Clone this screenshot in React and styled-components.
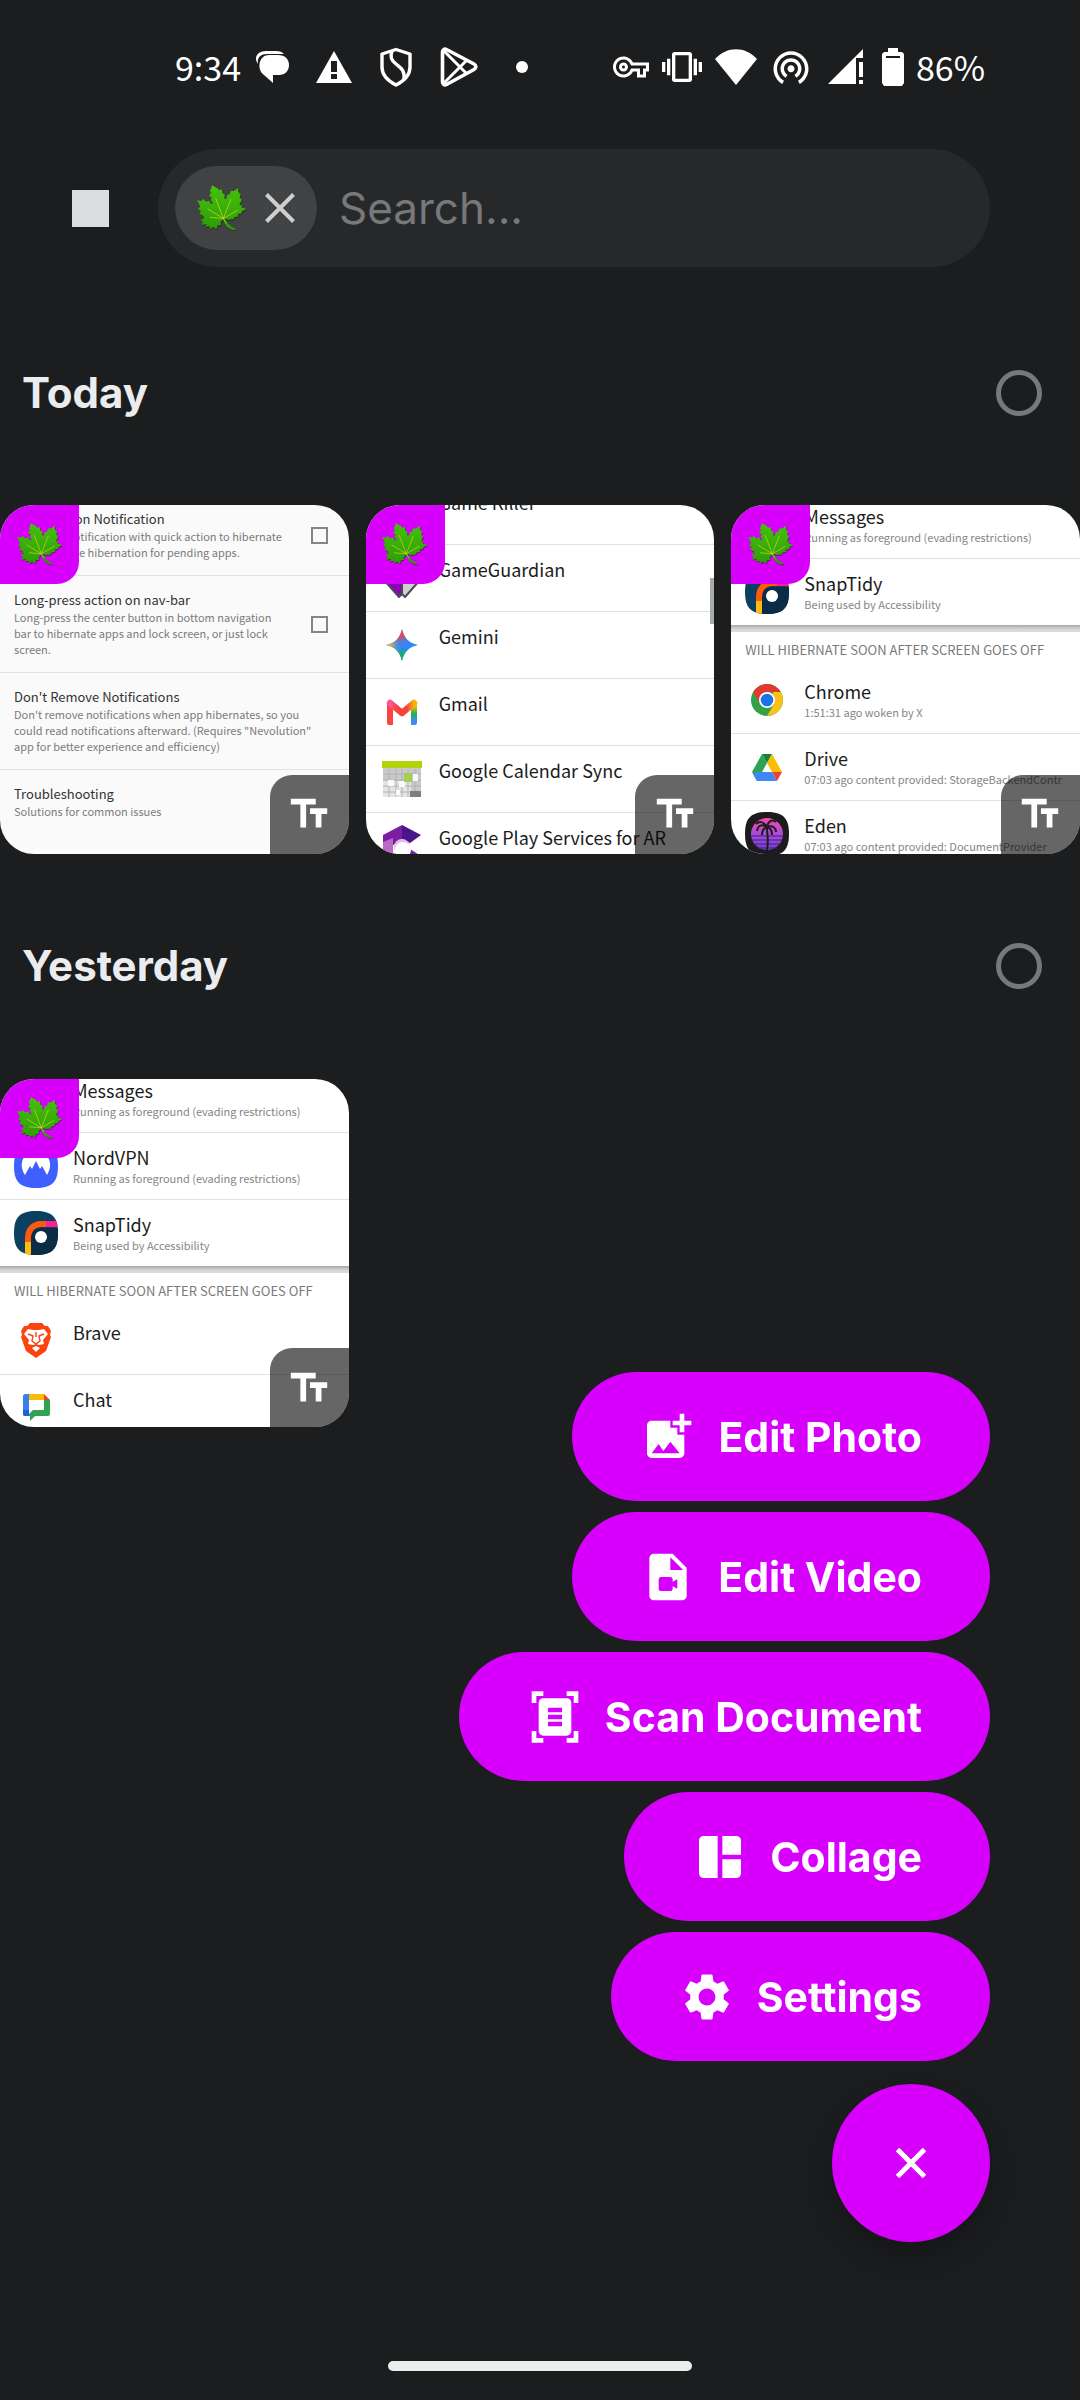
import React, { useState } from 'react'
import styled, { createGlobalStyle, ThemeProvider } from 'styled-components';
import {
  MdAddPhotoAlternate, MdDocumentScanner, MdOutlineVpnKey, MdSettings, MdTextFields, MdVibration, MdVideoFile, MdWifiTethering
} from "react-icons/md";

const theme = {
  bg: "#1b1d1e",
  bgLighter: "#27282a",
  chip: "#414243",
  text: "#ebecee",
  muted: "#77787a",
  accent: "#d600fc",
  ui: `Inter, "Liberation Sans", sans-serif`,
  system: `"Noto Sans CJK SC", "Noto Sans", sans-serif`,
};

const GlobalStyle = createGlobalStyle`
  * { box-sizing: border-box; }
  body {
    margin: 0;
    background-color: ${theme.bg};
    font-family: ${theme.ui};
  }
  h2, p, ul { margin: 0; padding: 0; }
  button { border: none; padding: 0; cursor: pointer; font-family: inherit; }
  svg { display: block; flex: none; }
`;

const Container = styled.div`
  display: flex;
  flex-direction: column;
  min-height: 100vh;
  background-color: ${({ theme }) => theme.bg};
  color: ${({ theme }) => theme.text};
`;
const StatusBar = styled.div`
  display: flex;
  align-items: center;
  justify-content: space-between;
  height: 136px;
  padding: 0 95px 2px 175px;
  color: #fff;
  font-family: ${({ theme }) => theme.system};
  font-size: 34px;
  line-height: 40px;
`;
const StatusGroup = styled.div`
  display: flex;
  align-items: center;
  gap: ${({ $gap }) => $gap}px;
`;
const Header = styled.header`
  display: flex;
  align-items: center;
  gap: 49px;
  height: 144px;
  padding: 0 90px 0 72px;
`;
const SquareButton = styled.button`
  flex: none;
  width: 37px;
  height: 37px;
  background-color: #dbdcdf;
`;
const Search = styled.div`
  flex: 1;
  min-width: 0;
  display: flex;
  align-items: center;
  gap: 20px;
  height: 118px;
  padding: 0 17px;
  border-radius: 59px;
  background-color: ${({ theme }) => theme.bgLighter};
`;
const Chip = styled.div`
  display: flex;
  align-items: center;
  gap: 18px;
  height: 84px;
  padding: 0 22px;
  border-radius: 42px;
  background-color: ${({ theme }) => theme.chip};
`;
const ChipClose = styled.button`
  background: transparent;
  color: #cfcfd0;
`;
const Input = styled.input`
  flex: 1;
  min-width: 0;
  border: none;
  outline: none;
  background: transparent;
  color: ${({ theme }) => theme.text};
  font-family: inherit;
  font-size: 44px;
  font-weight: 400;
  &::placeholder {
    color: ${({ theme }) => theme.muted};
    opacity: 1;
  }
`;
const SectionHeader = styled.div`
  display: flex;
  align-items: center;
  justify-content: space-between;
  height: 225px;
  padding: 0 38px 0 22px;
`;
const SectionTitle = styled.h2`
  font-size: 42px;
  line-height: 48px;
  font-weight: 700;
`;
const SelectCircle = styled.input`
  appearance: none;
  width: 46px;
  height: 46px;
  margin: 0;
  border: 5px solid ${({ theme }) => theme.muted};
  border-radius: 50%;
`;
const Grid = styled.div`
  display: grid;
  grid-template-columns: repeat(3, minmax(0, 1fr));
  gap: 17px;
`;
const Card = styled.div`
  position: relative;
  aspect-ratio: 1;
  overflow: hidden;
  border-radius: 34px;
  background-color: ${({ $tint }) => $tint || '#fff'};
  color: #1c1c1c;
  font-family: ${({ theme }) => theme.system};
`;
const LeafBadge = styled.div`
  position: absolute;
  top: 0;
  left: 0;
  display: flex;
  align-items: center;
  justify-content: center;
  width: 79px;
  height: 79px;
  border-radius: 0 0 22px 0;
  background-color: ${({ theme }) => theme.accent};
`;
const TextBadge = styled.div`
  position: absolute;
  right: 0;
  bottom: 0;
  display: flex;
  align-items: center;
  justify-content: center;
  width: 79px;
  height: 79px;
  border-radius: 22px 0 0 0;
  background-color: rgba(0, 0, 0, 0.6);
  color: #fff;
`;
const Shot = styled.div`
  margin-top: -${({ $scrolled }) => $scrolled}px;
`;
const Pref = styled.label`
  display: flex;
  align-items: center;
  justify-content: space-between;
  padding: 15px 21px 15px 14px;
  border-bottom: 1px solid #e2e2e2;
  &:last-child {
    border-bottom: none;
  }
`;
const PrefTitle = styled.p`
  font-size: 13px;
  line-height: 18px;
  white-space: nowrap;
  color: #333;
`;
const PrefText = styled.p`
  font-size: 11px;
  line-height: 16px;
  white-space: pre;
  color: #7a7a7a;
`;
const PrefBox = styled.input`
  appearance: none;
  flex: none;
  width: 17px;
  height: 17px;
  margin: 0;
  border: 2px solid #858585;
`;
const AppRow = styled.div`
  display: flex;
  gap: 15px;
  height: ${({ $last }) => ($last ? 66 : 67)}px;
  padding: 0 0 0 14px;
  border-bottom: ${({ $last }) => ($last ? 'none' : '1px solid #e0e0e0')};
`;
const AppIcon = styled.div`
  display: flex;
  align-items: center;
  justify-content: center;
  flex: none;
  width: 44px;
  height: 66px;
`;
const AppInfo = styled.div`
  padding-top: 10px;
  white-space: nowrap;
`;
const AppName = styled.p`
  font-size: 18px;
  line-height: 28px;
`;
const AppState = styled.p`
  font-size: 11px;
  line-height: 14px;
  color: #858585;
`;
const Divider = styled.div`
  height: 7px;
  background: linear-gradient(#a9a9a9, #d6d6d6 60%, #dcdcdc);
`;
const ListTitle = styled.p`
  padding: 0 14px;
  font-size: 13px;
  line-height: 35px;
  white-space: nowrap;
  color: #7a7a7a;
`;
const ScrollThumb = styled.div`
  position: absolute;
  top: 73px;
  right: 0;
  width: 4px;
  height: 46px;
  background-color: #a9acac;
`;
const Menu = styled.div`
  position: fixed;
  right: 90px;
  bottom: 158px;
  display: flex;
  flex-direction: column;
  align-items: flex-end;
  gap: 11px;
`;
const MenuItem = styled.button`
  display: flex;
  align-items: center;
  gap: 22px;
  height: 129px;
  padding: 0 68px;
  border-radius: 65px;
  background-color: ${({ theme }) => theme.accent};
  color: #fff;
  font-size: 41px;
  font-weight: 700;
`;
const Fab = styled.button`
  display: flex;
  align-items: center;
  justify-content: center;
  width: 158px;
  height: 158px;
  margin-top: 12px;
  border-radius: 50%;
  background-color: ${({ theme }) => theme.accent};
  color: #fff;
  box-shadow: 0 14px 28px rgba(0, 0, 0, 0.25);
`;
const NavBar = styled.div`
  display: flex;
  justify-content: center;
  margin-top: auto;
  padding-bottom: 29px;
`;
const NavHandle = styled.div`
  width: 304px;
  height: 10px;
  border-radius: 5px;
  background-color: #eceeee;
`;

const leafShape = "M485 167L500 176L504 181L512 179L513 190L520 195L519 205L523 209L527 195L534 193L536 184L545 184L557 175L557 187L564 195L561 203L567 210L560 225L568 226L565 232L580 237L568 243L566 250L556 252L557 259L545 262L546 267L530 269L519 266L525 277L537 288L549 296L549 300L541 299L528 292L520 280L515 268L508 276L510 284L500 286L497 298L489 290L480 296L478 288L466 289L470 282L455 284L460 276L453 268L463 266L461 258L450 252L454 243L446 238L452 230L443 211L455 213L461 207L467 215L478 213L480 220L488 222L481 210L484 204L476 198L482 190L479 184Z";

const Leaf = ({ width }) => (
  <svg width={width} viewBox="0 0 148 137" aria-hidden="true">
    <defs>
      <linearGradient id="leafFill" x1="0" y1="0" x2="0" y2="1">
        <stop offset="0" stopColor="#45c20c" />
        <stop offset="1" stopColor="#2e9a06" />
      </linearGradient>
    </defs>
    <g transform="translate(0 1) scale(1.07 1)">
      <path transform="translate(-441 -164)" fill="#0b2a05" opacity="0.6" d={leafShape} />
      <path transform="translate(-443 -167)" fill="url(#leafFill)" d={leafShape} />
      <path
        transform="translate(-443 -167)"
        fill="none"
        stroke="#d3dc1e"
        strokeWidth="2"
        strokeLinecap="round"
        d="M516 265L495 206M516 265L537 208M516 265L473 237M516 265L555 241M516 265L480 262M516 265L524 278"
      />
    </g>
  </svg>
)

const ChatBubbles = () => (
  <svg width="36" height="36" viewBox="0 0 36 36" fill="#fff">
    <path d="M4 15C-1 8 4 2 12 2h10c4 0 6 1 8 3H13C6 5 3 9 4 15z" />
    <path d="M15 6h9c7 0 11 4 11 10s-4 10-10 10h-6v8l-9-8C2 20 5 6 15 6z" />
  </svg>
)

const Warning = () => (
  <svg width="36" height="36" viewBox="0 0 36 36">
    <path fill="#fff" fillRule="evenodd" d="M18 2L36 34H0zM15 12v11h6V12zM15 25v5h6v-5z" />
  </svg>
)

const Shield = () => (
  <svg width="36" height="40" viewBox="0 0 36 40" fill="none" stroke="#fff" strokeWidth="3.4" strokeLinejoin="round">
    <path d="M18 2.5L32 7v13c0 8-6 14-14 18C10 34 4 28 4 20V7z" />
    <path d="M14 4c-2 6-1 9 4 13s9 6 8 16" />
  </svg>
)

const PlayStore = () => (
  <svg width="38" height="40" viewBox="0 0 38 40" fill="none" stroke="#fff" strokeWidth="3.6" strokeLinejoin="round">
    <path d="M2.5 5c0-2.5 2-3.5 4-2.5L34 17c2.5 1.5 2.5 4 0 5.5L6.5 37.5c-2 1-4 0-4-2.5z" />
    <path strokeWidth="3" d="M4 4l22 22M4 36l22-22" />
  </svg>
)

const Dot = () => (
  <svg width="36" height="36" viewBox="0 0 36 36"><circle cx="18" cy="18" r="6" fill="#fff" /></svg>
)

const Wifi = () => (
  <svg width="42" height="36" viewBox="0 0 42 36"><path fill="#fff" d="M0 10C12-3 30-3 42 10L21 36z" /></svg>
)

const Signal = () => (
  <svg width="44" height="38" viewBox="0 0 44 38" fill="#fff">
    <path d="M38 1v9h-7v26H3z" />
    <path d="M34 14h4v15h-4zM34 32h4v4h-4z" />
  </svg>
)

const Battery = () => (
  <svg width="22" height="38" viewBox="0 0 22 38">
    <path fill="#fff" fillRule="evenodd" d="M6 0h10v4h4l2 2v29l-2 3H2l-2-3V6l2-2h4zM4 8v2h14V8z" />
  </svg>
)

const Cross = ({ stroke = 4 }) => (
  <svg width="30" height="30" viewBox="0 0 30 30" fill="none" stroke="currentColor" strokeWidth={stroke}>
    <path d="M1.5 1.5l27 27M28.5 1.5l-27 27" />
  </svg>
)

const CollageIcon = () => (
  <svg width="56" height="56" viewBox="0 0 24 24" fill="currentColor">
    <path d="M11 3v18H5a2 2 0 0 1-2-2V5c0-1.1.9-2 2-2zM13 3h6a2 2 0 0 1 2 2v6h-8zM13 13h8v6a2 2 0 0 1-2 2h-6z" />
  </svg>
)

const Gemini = () => (
  <svg width="32" height="32" viewBox="0 0 32 32">
    <defs>
      <clipPath id="spark"><path d="M16 0c2 9 7 14 16 16-9 2-14 7-16 16-2-9-7-14-16-16C9 14 14 9 16 0z" /></clipPath>
      <filter id="soft"><feGaussianBlur stdDeviation="3" /></filter>
    </defs>
    <g clipPath="url(#spark)">
      <path fill="#3186ff" d="M0 0h32v32H0z" />
      <g filter="url(#soft)">
        <circle cx="14" cy="3" r="8" fill="#f9433d" />
        <circle cx="1" cy="16" r="7" fill="#fbc110" />
        <circle cx="14" cy="30" r="9" fill="#0eb45c" />
      </g>
    </g>
  </svg>
)

const Gmail = () => (
  <svg width="32" height="26" viewBox="0 0 32 26">
    <defs>
      <linearGradient id="mailRight" x1="0" y1="0" x2="0" y2="1">
        <stop offset="0.15" stopColor="#fcbc05" />
        <stop offset="0.5" stopColor="#1fae5a" />
        <stop offset="0.85" stopColor="#3f8bfc" />
      </linearGradient>
      <linearGradient id="mailTop" x1="0" y1="0" x2="1" y2="0">
        <stop offset="0" stopColor="#fb5a98" />
        <stop offset="0.3" stopColor="#f9423d" />
        <stop offset="0.7" stopColor="#f9423d" />
        <stop offset="1" stopColor="#fcb205" />
      </linearGradient>
    </defs>
    <path fill="#f9473f" d="M1 5l6 3v18H3c-1 0-2-1-2-2z" />
    <path fill="url(#mailRight)" d="M31 4v20c0 1-1 2-2 2h-4V8z" />
    <path fill="none" stroke="url(#mailTop)" strokeWidth="6.5" strokeLinecap="round" strokeLinejoin="round" d="M4 4l12 10L28 4" />
  </svg>
)

const CalendarSync = () => (
  <svg width="40" height="36" viewBox="0 0 40 36">
    <path fill="#c9c9c9" d="M1 6h38v30H1z" />
    <path fill="#e4e4e4" d="M1 20h28v16H1z" />
    <path stroke="#b2b2b2" strokeWidth="1" d="M1 13h38M1 19h38M1 25h38M1 31h38M7 8v28M14 8v28M20 8v28M26 8v28M33 8v28" />
    <path fill="#b1d30b" d="M0 0h40v7H0z" />
    <path fill="#fafafa" d="M6 19h6v6H6zM17 20h6v6h-6zM31 13h5v7h-5zM14 29h4v5h-4z" />
    <path fill="#a5cf4c" d="M22 12h8v9h-8z" />
    <path fill="#7e7e7e" d="M28 30h11v6H28z" />
  </svg>
)

const ArCore = () => (
  <svg width="38" height="42" viewBox="0 0 38 42">
    <path fill="#7b1fa2" d="M0 10L19 0v14L9 21 0 17z" />
    <path fill="#4a148c" d="M19 0l19 10-11 8-8-4z" />
    <path fill="#ba68c8" d="M0 17l10-4v14l9 15L0 31z" />
    <path fill="#7b1fa2" d="M19 42l19-11-11-7-8 5z" />
    <circle cx="19" cy="22" r="8" fill="#e1bee7" />
    <circle cx="20" cy="25" r="8" fill="#fff" />
  </svg>
)

const Guardian = () => (
  <svg width="38" height="40" viewBox="0 0 38 40" stroke="#4b4b4f" strokeWidth="2" strokeLinejoin="round">
    <path fill="#8e00bd" d="M19 2v34l-3 3L1 22 4 8z" />
    <path fill="#cfcfcf" d="M19 2l15 6 3 14-15 17-3-3z" />
  </svg>
)

const SnapTidy = () => (
  <svg width="44" height="44" viewBox="0 0 44 44">
    <defs><clipPath id="squircle"><path d="M22 0C38 0 44 6 44 22S38 44 22 44 0 38 0 22 6 0 22 0z" /></clipPath></defs>
    <g clipPath="url(#squircle)">
      <path fill="#0b4060" d="M0 0h44v44H0z" />
      <path fill="#0a2c45" d="M17 44V28c0-7 5-11 11-11h16v27z" />
      <path fill="none" stroke="#ff5a0c" strokeWidth="6" d="M14 32v-5c0-9 6-14 13-14h6" />
      <path fill="#ff1d95" d="M32 10h12v6H32z" />
      <path fill="#fdbb10" d="M11 31h6v13h-6z" />
      <circle cx="27" cy="26" r="6" fill="#fff" />
    </g>
  </svg>
)

const NordVpn = () => (
  <svg width="44" height="44" viewBox="0 0 44 44">
    <path fill="#3f5fff" d="M22 0C38 0 44 6 44 22S38 44 22 44 0 38 0 22 6 0 22 0z" />
    <path fill="#fff" d="M11 31C4 20 9 8 22 8s18 12 11 23l-5-9-2 3-4-8-4 8-2-3z" />
  </svg>
)

const Chrome = () => (
  <svg width="32" height="32" viewBox="0 0 32 32">
    <circle cx="16" cy="16" r="16" fill="#34a047" />
    <path fill="#df3a2d" d="M2.2 8A16 16 0 0 1 29.8 8H16L9 20z" />
    <path fill="#fcc017" d="M29.8 8A16 16 0 0 1 16 32l7-12-1-12z" />
    <circle cx="16" cy="16" r="8" fill="#fff" />
    <circle cx="16" cy="16" r="6.3" fill="#1a73e8" />
  </svg>
)

const Drive = () => (
  <svg width="30" height="27" viewBox="0 0 30 27">
    <path fill="#2fa34f" d="M10 0l5 9-5 9-5 9-5-9z" />
    <path fill="#188038" d="M10 0h10l-5 9z" />
    <path fill="#fbbc04" d="M20 0l10 18H20L15 9z" />
    <path fill="#4285f4" d="M5 18h15l5 9H5l-4-7z" />
    <path fill="#ea4335" d="M20 18h10l-5 9z" />
  </svg>
)

const Eden = () => (
  <svg width="44" height="44" viewBox="0 0 44 44">
    <defs>
      <linearGradient id="sunset" x1="0" y1="0" x2="0" y2="1">
        <stop offset="0" stopColor="#f64aa8" />
        <stop offset="0.6" stopColor="#9a4ae0" />
        <stop offset="1" stopColor="#6f3fd8" />
      </linearGradient>
    </defs>
    <path fill="#1d1b1e" d="M22 0C38 0 44 6 44 22S38 44 22 44 0 38 0 22 6 0 22 0z" />
    <circle cx="22" cy="22" r="16" fill="url(#sunset)" />
    <path stroke="#4b1d6b" strokeWidth="1" d="M6 24h32M7 28h30M8 32h28M12 36h20" />
    <path fill="none" stroke="#1d1b1e" strokeWidth="2" d="M22 38c2-10 0-16 0-22M22 15c-5-3-9-2-10 4M22 15c-4-6-8-6-11-3M22 15c1-6 5-8 9-5M22 15c6-2 9 1 9 5M22 15c-3 1-5 4-5 8M22 15c4 1 5 4 5 8" />
  </svg>
)

const Brave = () => (
  <svg width="30" height="35" viewBox="0 0 30 35">
    <path fill="#fb4410" d="M9 0h12l3 3h3l3 5-1 4 1 2-5 14-10 7-10-7L0 14l1-2-1-4 3-5h3z" />
    <path fill="#fff" d="M7 6l5 1h6l5-1 4 5-5 6 1 4-5 1-3-1-3 1-5-1 1-4-5-6z" />
    <path fill="#fff" d="M11 25l4-2 4 2-4 4z" />
    <path fill="none" stroke="#fb4410" strokeWidth="1.4" d="M7 11l5 2-1 5 4 3 4-3-1-5 5-2M15 9v5" />
  </svg>
)

const Chat = () => (
  <svg width="27" height="27" viewBox="0 0 27 27">
    <path fill="#3c7df0" d="M0 2c0-1 1-2 2-2h5v22H2c-1 0-2-1-2-2z" />
    <path fill="#fbbc04" d="M6 0h15v6H6z" />
    <path fill="#ea4335" d="M21 0l6 6h-6z" />
    <path fill="#2fa34f" d="M21 6h6v14c0 1-1 2-2 2H12l-5 5v-11h14z" />
    <path fill="#1f62d0" d="M0 16h6v6H2c-1 0-2-1-2-2z" />
    <path fill="#fff" d="M6 6h15v10H10l-4 4z" />
  </svg>
)

const prefs = [
  { title: "Quick Action Notification", text: "Show one notification with quick action to hibernate\nand postpone hibernation for pending apps.", box: true },
  { title: "Long-press action on nav-bar", text: "Long-press the center button in bottom navigation\nbar to hibernate apps and lock screen, or just lock\nscreen.", box: true },
  { title: "Don't Remove Notifications", text: "Don't remove notifications when app hibernates, so you\ncould read notifications afterward. (Requires \"Nevolution\"\napp for better experience and efficiency)" },
  { title: "Troubleshooting", text: "Solutions for common issues" },
];

const installed = [
  { name: "Game Killer" },
  { name: "GameGuardian", icon: <Guardian /> },
  { name: "Gemini", icon: <Gemini /> },
  { name: "Gmail", icon: <Gmail /> },
  { name: "Google Calendar Sync", icon: <CalendarSync /> },
  { name: "Google Play Services for AR", icon: <ArCore /> },
];

const running = "Running as foreground (evading restrictions)";
const messages = { name: "Messages", state: running };
const nord = { name: "NordVPN", state: running, icon: <NordVpn /> };
const snap = { name: "SnapTidy", state: "Being used by Accessibility", icon: <SnapTidy /> };

const todaySoon = [
  { name: "Chrome", state: "1:51:31 ago woken by X", icon: <Chrome /> },
  { name: "Drive", state: "07:03 ago content provided: StorageBackendContr", icon: <Drive /> },
  { name: "Eden", state: "07:03 ago content provided: DocumentProvider", icon: <Eden /> },
];
const yesterdaySoon = [
  { name: "Brave", icon: <Brave /> },
  { name: "Chat", icon: <Chat /> },
];

const actions = [
  { label: "Edit Photo", icon: <MdAddPhotoAlternate size={56} /> },
  { label: "Edit Video", icon: <MdVideoFile size={56} /> },
  { label: "Scan Document", icon: <MdDocumentScanner size={56} /> },
  { label: "Collage", icon: <CollageIcon /> },
  { label: "Settings", icon: <MdSettings size={56} /> },
];

const AppList = ({ apps, endless }) => apps.map((app, i) => (
  <AppRow key={app.name} $last={!endless && i === apps.length - 1}>
    <AppIcon>{app.icon}</AppIcon>
    <AppInfo>
      <AppName>{app.name}</AppName>
      {app.state && <AppState>{app.state}</AppState>}
    </AppInfo>
  </AppRow>
))

const Thumb = ({ tint, scrolled, children }) => (
  <Card $tint={tint}>
    <Shot $scrolled={scrolled}>{children}</Shot>
    <LeafBadge><Leaf width={46} /></LeafBadge>
    <TextBadge><MdTextFields size={46} /></TextBadge>
  </Card>
)

const Section = ({ title, children }) => (
  <section>
    <SectionHeader>
      <SectionTitle>{title}</SectionTitle>
      <SelectCircle type="checkbox" aria-label={`Select ${title}`} />
    </SectionHeader>
    <Grid>{children}</Grid>
  </section>
)

const App = () => {
  const [q, setQ] = useState("");
  const [filtered, setFiltered] = useState(true);
  const [open, setOpen] = useState(true);
  return (
    <ThemeProvider theme={theme}>
      <GlobalStyle />
      <Container>
        <StatusBar>
          <StatusGroup $gap={13}>
            <span>9:34</span>
            <StatusGroup $gap={26}>
              <ChatBubbles />
              <Warning />
              <Shield />
              <PlayStore />
              <Dot />
            </StatusGroup>
          </StatusGroup>
          <StatusGroup $gap={13}>
            <MdOutlineVpnKey size={36} />
            <MdVibration size={40} />
            <Wifi />
            <MdWifiTethering size={42} />
            <Signal />
            <StatusGroup $gap={12}>
              <Battery />
              <span>86%</span>
            </StatusGroup>
          </StatusGroup>
        </StatusBar>
        <Header>
          <SquareButton aria-label="Menu" />
          <Search>
            {filtered && (
              <Chip>
                <Leaf width={50} />
                <ChipClose aria-label="Remove filter" onClick={() => setFiltered(false)}><Cross /></ChipClose>
              </Chip>
            )}
            <Input aria-label="Search" placeholder="Search..." value={q} onChange={e => setQ(e.target.value)} />
          </Search>
        </Header>
        <Section title="Today">
          <Thumb tint="#fafafa" scrolled={10}>
            {prefs.map(pref => (
              <Pref key={pref.title} as={pref.box ? 'label' : 'div'}>
                <div>
                  <PrefTitle>{pref.title}</PrefTitle>
                  <PrefText>{pref.text}</PrefText>
                </div>
                {pref.box && <PrefBox type="checkbox" />}
              </Pref>
            ))}
          </Thumb>
          <Thumb scrolled={27}>
            <AppList apps={installed} endless />
            <ScrollThumb />
          </Thumb>
          <Thumb scrolled={13}>
            <AppList apps={[messages, snap]} />
            <Divider />
            <ListTitle>WILL HIBERNATE SOON AFTER SCREEN GOES OFF</ListTitle>
            <AppList apps={todaySoon} endless />
          </Thumb>
        </Section>
        <Section title="Yesterday">
          <Thumb scrolled={13}>
            <AppList apps={[messages, nord, snap]} />
            <Divider />
            <ListTitle>WILL HIBERNATE SOON AFTER SCREEN GOES OFF</ListTitle>
            <AppList apps={yesterdaySoon} endless />
          </Thumb>
        </Section>
        <NavBar><NavHandle /></NavBar>
      </Container>
      <Menu>
        {open && actions.map(action => (
          <MenuItem key={action.label}>{action.icon}{action.label}</MenuItem>
        ))}
        <Fab aria-label="Toggle menu" onClick={() => setOpen(!open)}><Cross stroke={5} /></Fab>
      </Menu>
    </ThemeProvider>
  )
}

export default App
